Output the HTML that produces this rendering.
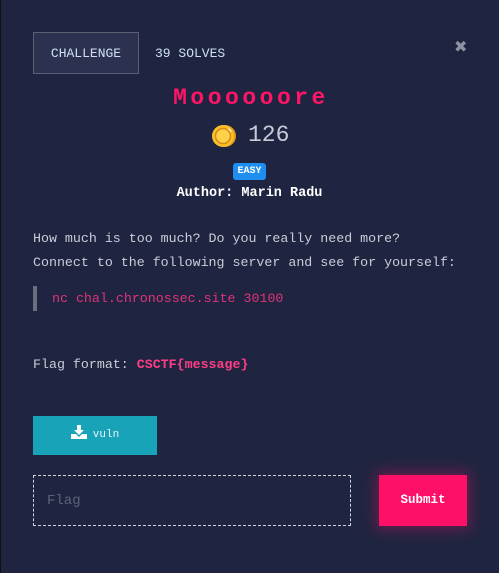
<!DOCTYPE html>
<html><head><style>
*{margin:0;padding:0;box-sizing:border-box}
body{width:499px;height:573px;background:#1f2540;overflow:hidden;font-family:"Liberation Mono",monospace;color:#d8dbe6;position:relative}
.abs{position:absolute}
</style></head><body>
<div class="abs" style="left:0;top:0;width:1px;height:573px;background:#111"></div>
<div class="abs" style="left:33px;top:32px;width:106px;height:42px;border:1px solid #5a5f72;background:#2c3150;color:#cfe0f4;font-size:13px;line-height:42px;text-align:center">CHALLENGE</div>
<div class="abs" style="left:155px;top:46px;font-size:13px;color:#cfe0f4">39 SOLVES</div>
<div class="abs" style="left:454px;top:37px;font-size:16px;color:#8d93a3;font-weight:bold;font-family:'DejaVu Sans',sans-serif">✖</div>
<div class="abs" style="left:0;width:499px;top:85px;text-align:center;font-size:23px;font-weight:bold;color:#ff1466;letter-spacing:3.5px;padding-left:3px">Moooooore</div>
<svg class="abs" style="left:211px;top:123px" width="26" height="26" viewBox="0 0 26 26"><circle cx="14" cy="13" r="11" fill="#e29a1c"/><circle cx="12" cy="13" r="11" fill="#fbbf2a"/><circle cx="12" cy="13" r="7.5" fill="#ffd04a" stroke="#d38c14" stroke-width="1.5"/><path d="M17 6 a4 4 0 0 1 3 3" stroke="#fff" fill="none" stroke-width="1"/></svg>
<div class="abs" style="left:248px;top:122px;font-size:23px;color:#c7ccd8">126</div>
<div class="abs" style="left:233px;top:163px;width:33px;height:17px;background:#1e8ff0;border-radius:3px;color:#fff;font-size:10px;font-weight:bold;line-height:17px;text-align:center">EASY</div>
<div class="abs" style="left:0;width:499px;top:186px;text-align:center;font-size:13.5px;font-weight:bold;color:#fff">Author: Marin Radu</div>
<div class="abs" style="left:33px;top:227px;font-size:13.3px;line-height:24px;color:#c9cdd8">How much is too much? Do you really need more?<br>Connect to the following server and see for yourself:</div>
<div class="abs" style="left:33px;top:286px;width:4px;height:25px;background:#6b6f7d"></div>
<div class="abs" style="left:52px;top:291px;font-size:13.3px;color:#e0337a">nc chal.chronossec.site 30100</div>
<div class="abs" style="left:33px;top:357px;font-size:13.3px;color:#c9cdd8">Flag format: <b style="color:#ff3d86">CSCTF{message}</b></div>
<div class="abs" style="left:33px;top:416px;width:124px;height:39px;background:#18a3b8;color:#e8f6fa;font-size:11px;line-height:39px;text-align:center"><svg width="16" height="14" viewBox="0 0 16 14" style="vertical-align:-2px;margin-right:6px"><path d="M6 0h4v5h3l-5 5-5-5h3z" fill="#fff"/><path d="M0 9h5l3 3 3-3h5v5H0z" fill="#fff"/></svg>vuln</div>
<div class="abs" style="left:33px;top:475px;width:318px;height:51px;border:1px dashed #d0d3dc;color:#5d6375;font-size:14px;line-height:51px;padding-left:13px">Flag</div>
<div class="abs" style="left:379px;top:475px;width:88px;height:51px;background:#ff1068;color:#fff;font-size:12.5px;font-weight:bold;line-height:51px;text-align:center;box-shadow:0 0 14px 3px rgba(255,16,104,0.35)">Submit</div>
</body></html>
